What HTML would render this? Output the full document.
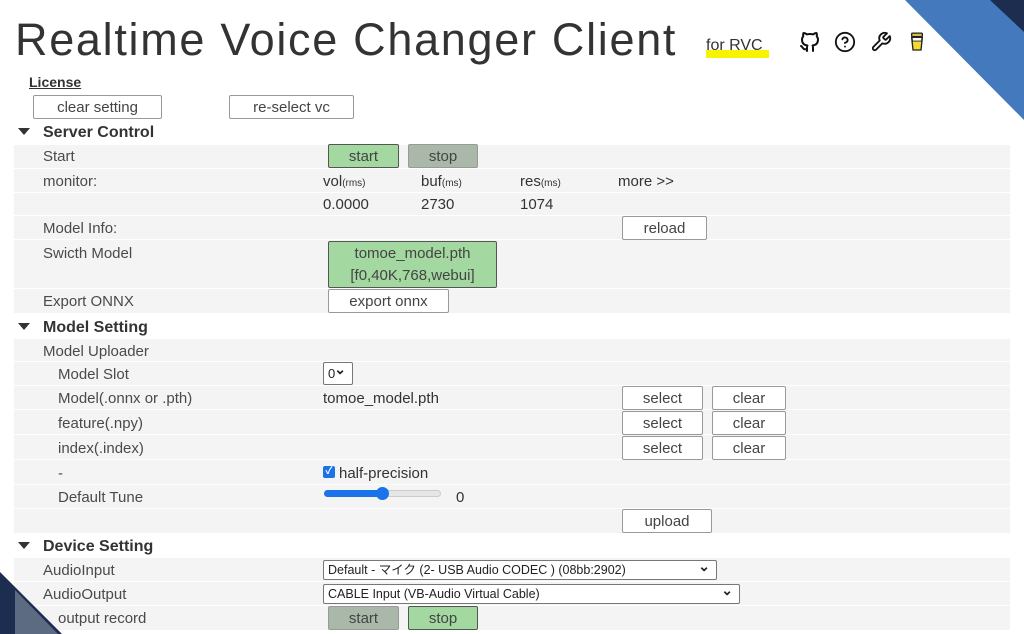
<!DOCTYPE html>
<html><head><meta charset="utf-8"><style>
*{margin:0;padding:0;box-sizing:border-box}
body{width:1024px;height:634px;overflow:hidden;background:#fff;position:relative;font-family:"Liberation Sans","Noto Sans CJK JP",sans-serif;color:#333}
.a{position:absolute;white-space:nowrap}
.row{position:absolute;left:14px;width:996px;background:#f3f4f3}
.lb{position:absolute;font-size:15px;color:#4a4a4a;line-height:18px;margin-top:2px}
.v{position:absolute;font-size:15px;color:#333;line-height:18px;margin-top:2px}
.btn{position:absolute;border:1px solid #999;background:#fff;font-size:15px;color:#444;text-align:center;border-radius:2px;padding-top:1px}
.g{background:#a3d8a0;border-color:#555}
.gr{background:#a9b8a8;border-color:#999}
.h{position:absolute;font-size:16px;font-weight:bold;color:#333;line-height:18px;margin-top:2px}
.tri{position:absolute;left:18px;width:0;height:0;border-left:6px solid transparent;border-right:6px solid transparent;border-top:7px solid #333}
small{font-size:10px}
.sel{position:absolute;border:1px solid #777;border-radius:2px;background:#fff;font-size:12.5px;color:#222;padding-left:4px;line-height:18px;height:20px}
.sel:after{content:"⌄";position:absolute;right:6px;top:-4px;font-size:14px;font-weight:bold}
</style></head><body>
<div class="a" style="left:15px;top:12px;font-size:45px;color:#333;letter-spacing:1.7px;line-height:56px">Realtime Voice Changer Client</div>
<div class="a" style="left:706px;top:50px;width:63px;height:8px;background:#f6f400"></div>
<div class="a" style="left:706px;top:37px;font-size:16px;color:#333">for RVC</div>
<svg class="a" style="left:798px;top:30px" width="24" height="24" viewBox="0 0 24 24" fill="none" stroke="#111" stroke-width="2" stroke-linecap="round" stroke-linejoin="round"><path d="M9 19c-4.3 1.4-4.3-2.5-6-3m12 5v-3.5c0-1 .1-1.4-.5-2 2.8-.3 5.5-1.4 5.5-6a4.6 4.6 0 0 0-1.3-3.2 4.2 4.2 0 0 0-.1-3.2s-1.1-.3-3.5 1.3a12.3 12.3 0 0 0-6.2 0C6.5 2.8 5.4 3.1 5.4 3.1a4.2 4.2 0 0 0-.1 3.2A4.6 4.6 0 0 0 4 9.5c0 4.6 2.7 5.7 5.5 6-.6.6-.6 1.2-.5 2V21"/></svg>
<svg class="a" style="left:834px;top:31px" width="22" height="22" viewBox="0 0 24 24" fill="none" stroke="#111" stroke-width="2" stroke-linecap="round"><circle cx="12" cy="12" r="10"/><path d="M9.1 9a3 3 0 0 1 5.8 1c0 2-3 3-3 3"/><path d="M12 17h.01"/></svg>
<svg class="a" style="left:870px;top:31px" width="22" height="22" viewBox="0 0 24 24" fill="none" stroke="#111" stroke-width="2" stroke-linecap="round" stroke-linejoin="round"><path d="M14.7 6.3a1 1 0 0 0 0 1.4l1.6 1.6a1 1 0 0 0 1.4 0l3.8-3.8a6 6 0 0 1-7.9 7.9l-6.9 6.9a2.1 2.1 0 0 1-3-3l6.9-6.9a6 6 0 0 1 7.9-7.9l-3.8 3.8z"/></svg>
<svg class="a" style="left:909px;top:32px" width="16" height="20" viewBox="0 0 18 22"><rect x="3" y="1" width="12" height="4" rx="1" fill="#d9b94a" stroke="#222" stroke-width="1.5"/><path d="M3 6h12l-1.5 14h-9z" fill="#f4d92e" stroke="#222" stroke-width="1.5"/><path d="M3.5 6h11l-.5 4h-10z" fill="#fff" stroke="#222" stroke-width="1"/></svg>

<div class="a" style="left:29px;top:74px;font-size:14px;font-weight:bold;color:#333;text-decoration:underline">License</div>
<div class="btn" style="left:33px;top:95px;width:129px;height:24px;line-height:22px">clear setting</div>
<div class="btn" style="left:229px;top:95px;width:125px;height:24px;line-height:22px">re-select vc</div>

<div class="tri" style="top:128px"></div><div class="h" style="left:43px;top:122px">Server Control</div>
<div class="row" style="top:145px;height:23px"></div>
<div class="row" style="top:169px;height:23px"></div>
<div class="row" style="top:193px;height:22px"></div>
<div class="row" style="top:216px;height:23px"></div>
<div class="row" style="top:240px;height:48px"></div>
<div class="row" style="top:289px;height:24px"></div>
<div class="lb" style="left:43px;top:146px">Start</div>
<div class="btn g" style="left:328px;top:144px;width:71px;height:24px;line-height:22px">start</div>
<div class="btn gr" style="left:408px;top:144px;width:70px;height:24px;line-height:22px">stop</div>
<div class="lb" style="left:43px;top:171px">monitor:</div>
<div class="v" style="left:323px;top:171px">vol<small>(rms)</small></div>
<div class="v" style="left:421px;top:171px">buf<small>(ms)</small></div>
<div class="v" style="left:520px;top:171px">res<small>(ms)</small></div>
<div class="v" style="left:618px;top:171px">more &gt;&gt;</div>
<div class="v" style="left:323px;top:194px">0.0000</div>
<div class="v" style="left:421px;top:194px">2730</div>
<div class="v" style="left:520px;top:194px">1074</div>
<div class="lb" style="left:43px;top:218px">Model Info:</div>
<div class="btn" style="left:622px;top:216px;width:85px;height:24px;line-height:22px">reload</div>
<div class="lb" style="left:43px;top:243px">Swicth Model</div>
<div class="btn g" style="left:328px;top:241px;width:169px;height:47px;line-height:22px">tomoe_model.pth<br>[f0,40K,768,webui]</div>
<div class="lb" style="left:43px;top:291px">Export ONNX</div>
<div class="btn" style="left:328px;top:289px;width:121px;height:24px;line-height:22px">export onnx</div>

<div class="tri" style="top:323px"></div><div class="h" style="left:43px;top:317px">Model Setting</div>
<div class="row" style="top:339px;height:22px"></div>
<div class="row" style="top:362px;height:23px"></div>
<div class="row" style="top:386px;height:23px"></div>
<div class="row" style="top:410px;height:24px"></div>
<div class="row" style="top:435px;height:24px"></div>
<div class="row" style="top:460px;height:24px"></div>
<div class="row" style="top:485px;height:23px"></div>
<div class="row" style="top:509px;height:24px"></div>
<div class="lb" style="left:43px;top:341px">Model Uploader</div>
<div class="lb" style="left:58px;top:364px">Model Slot</div>
<div class="sel" style="left:323px;top:362px;width:30px;height:23px;line-height:21px;font-size:13px">0</div>
<div class="lb" style="left:58px;top:388px">Model(.onnx or .pth)</div>
<div class="v" style="left:323px;top:388px">tomoe_model.pth</div>
<div class="lb" style="left:58px;top:413px">feature(.npy)</div>
<div class="lb" style="left:58px;top:438px">index(.index)</div>
<div class="btn" style="left:622px;top:386px;width:81px;height:24px;line-height:22px">select</div>
<div class="btn" style="left:712px;top:386px;width:74px;height:24px;line-height:22px">clear</div>
<div class="btn" style="left:622px;top:411px;width:81px;height:24px;line-height:22px">select</div>
<div class="btn" style="left:712px;top:411px;width:74px;height:24px;line-height:22px">clear</div>
<div class="btn" style="left:622px;top:436px;width:81px;height:24px;line-height:22px">select</div>
<div class="btn" style="left:712px;top:436px;width:74px;height:24px;line-height:22px">clear</div>
<div class="lb" style="left:58px;top:463px">-</div>
<div class="a" style="left:323px;top:466px;width:12px;height:12px;background:#1a73e8;border-radius:2px;color:#fff;font-size:10px;line-height:12px;text-align:center;font-weight:bold">✓</div>
<div class="v" style="left:339px;top:463px">half-precision</div>
<div class="lb" style="left:58px;top:487px">Default Tune</div>
<div class="a" style="left:324px;top:490px;width:117px;height:7px;border-radius:4px;background:#e6e6e6;border:1px solid #ccc"></div>
<div class="a" style="left:324px;top:490px;width:58px;height:7px;border-radius:4px;background:#1a73e8"></div>
<div class="a" style="left:376px;top:487px;width:13px;height:13px;border-radius:50%;background:#1a73e8"></div>
<div class="v" style="left:456px;top:487px">0</div>
<div class="btn" style="left:622px;top:509px;width:90px;height:24px;line-height:22px">upload</div>

<div class="tri" style="top:542px"></div><div class="h" style="left:43px;top:536px">Device Setting</div>
<div class="row" style="top:558px;height:23px"></div>
<div class="row" style="top:582px;height:23px"></div>
<div class="row" style="top:606px;height:24px"></div>
<div class="lb" style="left:43px;top:560px">AudioInput</div>
<div class="lb" style="left:43px;top:584px">AudioOutput</div>
<div class="lb" style="left:58px;top:608px">output record</div>
<div class="sel" style="left:323px;top:560px;width:394px">Default - マイク (2- USB Audio CODEC ) (08bb:2902)</div>
<div class="sel" style="left:323px;top:584px;width:417px">CABLE Input (VB-Audio Virtual Cable)</div>
<div class="btn gr" style="left:328px;top:606px;width:71px;height:24px;line-height:22px">start</div>
<div class="btn g" style="left:408px;top:606px;width:70px;height:24px;line-height:22px">stop</div>
<svg class="a" style="left:0;top:0;z-index:5;pointer-events:none" width="1024" height="634">
<polygon points="905,0 1024,0 1024,120" fill="#4479bd"/>
<polygon points="990,0 1024,0 1024,32" fill="#1c2d4f"/>
<polygon points="0,572 0,634 62,634" fill="#1c2d4f"/>
<polygon points="15,590 15,634 58,634" fill="#5c6b82"/>
</svg>
</body></html>
